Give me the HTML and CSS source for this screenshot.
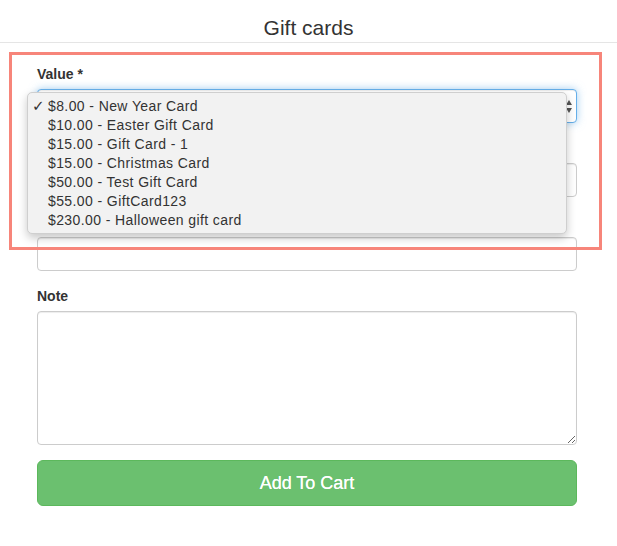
FILE: index.html
```html
<!DOCTYPE html>
<html>
<head>
<meta charset="utf-8">
<title>Gift cards</title>
<link rel="stylesheet" href="styles.css">
</head>
<body>
<div class="page">
  <header class="header">
    <h1 class="title">Gift cards</h1>
  </header>
  <form class="form">
    <div class="group">
      <label class="label">Value *</label>
      <div class="select-wrap">
        <div class="select">
          <svg class="spin" width="6" height="13" viewBox="0 0 6 13">
            <path d="M3 0 L6 5 L0 5 Z" fill="#555"/>
            <path d="M0 8 L6 8 L3 13 Z" fill="#555"/>
          </svg>
        </div>
        <ul class="menu">
          <li class="opt checked"><span class="check">✓</span>$8.00 - New Year Card</li>
          <li class="opt">$10.00 - Easter Gift Card</li>
          <li class="opt">$15.00 - Gift Card - 1</li>
          <li class="opt">$15.00 - Christmas Card</li>
          <li class="opt">$50.00 - Test Gift Card</li>
          <li class="opt">$55.00 - GiftCard123</li>
          <li class="opt">$230.00 - Halloween gift card</li>
        </ul>
      </div>
    </div>
    <div class="group">
      <label class="label"></label>
      <input class="input" type="text">
    </div>
    <div class="group">
      <label class="label"></label>
      <input class="input" type="text">
    </div>
    <div class="group">
      <label class="label">Note</label>
      <textarea class="textarea" rows="6"></textarea>
    </div>
    <button type="button" class="btn">Add To Cart</button>
  </form>
  <div class="highlight"></div>
</div>
</body>
</html>
```

FILE: styles.css
```css
* { box-sizing: border-box; }
html, body { margin: 0; padding: 0; background: #fff; }
body {
  font-family: "Liberation Sans", Arial, Helvetica, sans-serif;
  font-size: 14px;
  line-height: 20px;
  color: #333;
}
.page { position: relative; width: 617px; height: 546px; }
.header {
  height: 43px;
  border-bottom: 1px solid #e5e5e5;
  padding-top: 15px;
}
.title {
  margin: 0;
  text-align: center;
  font-size: 21px;
  font-weight: normal;
  line-height: 26px;
  color: #333;
}
.form {
  padding: 21px 40px 0 37px;
  margin: 0;
}
.group { margin-bottom: 15px; }
.label {
  display: block;
  height: 20px;
  margin-bottom: 5px;
  font-weight: bold;
  line-height: 20px;
}
.select-wrap { position: relative; }
.select {
  position: relative;
  height: 34px;
  border: 1px solid #66afe9;
  border-radius: 4px;
  background: #fff;
  box-shadow: inset 0 1px 1px rgba(0,0,0,.075), 0 0 8px rgba(102,175,233,.6);
}
.spin { position: absolute; right: 4px; top: 10px; }
.menu {
  position: absolute;
  top: 3px;
  left: -10px;
  width: 540px;
  height: 142px;
  margin: 0;
  padding: 4px 0;
  list-style: none;
  background: #f2f2f2;
  border: 1px solid #cfcfcf;
  border-radius: 5px;
  box-shadow: 0 4px 10px rgba(0,0,0,.22);
}
.opt {
  position: relative;
  padding-left: 20px;
  line-height: 19px;
  height: 19px;
  font-size: 14px;
  letter-spacing: 0.4px;
  color: #333;
  white-space: nowrap;
}
.check {
  position: absolute;
  left: 4px;
  top: 0;
  font-family: "DejaVu Sans", sans-serif;
  font-size: 15px;
  letter-spacing: 0;
}
.input {
  display: block;
  width: 100%;
  height: 34px;
  border: 1px solid #ccc;
  border-radius: 4px;
  background: #fff;
  box-shadow: inset 0 1px 1px rgba(0,0,0,.075);
  font: inherit;
  padding: 6px 12px;
  margin: 0;
}
.textarea {
  display: block;
  width: 100%;
  height: 134px;
  border: 1px solid #ccc;
  border-radius: 4px;
  background: #fff;
  box-shadow: inset 0 1px 1px rgba(0,0,0,.075);
  font: inherit;
  padding: 6px 12px;
  margin: 0;
  resize: vertical;
}
.btn {
  display: block;
  width: 100%;
  height: 46px;
  margin: 0;
  border: 1px solid #5cb85c;
  border-radius: 6px;
  background: #6bc06f;
  color: #fff;
  font-family: "Liberation Sans", Arial, Helvetica, sans-serif;
  font-size: 18px;
  line-height: 24px;
  padding: 10px 16px;
  text-shadow: 0 0 0.4px #fff;
}
.highlight {
  position: absolute;
  left: 9px;
  top: 52px;
  width: 593px;
  height: 198px;
  border: 3px solid #f7857a;
  pointer-events: none;
}
```
